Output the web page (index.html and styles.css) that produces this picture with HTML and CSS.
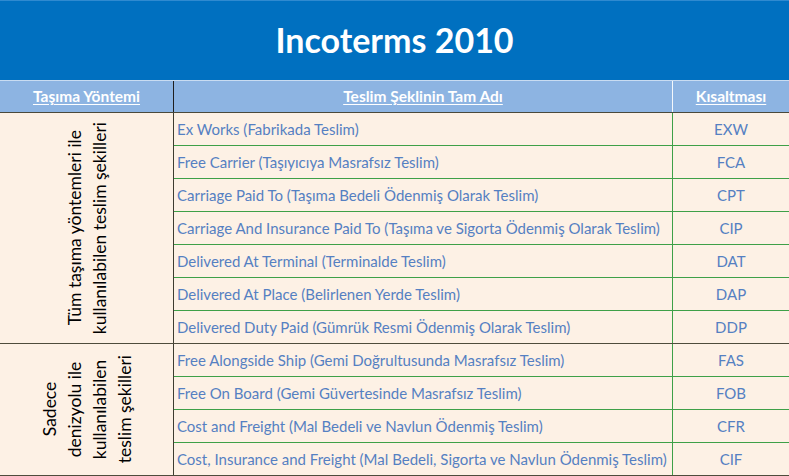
FILE: index.html
```html
<!DOCTYPE html>
<html lang="tr">
<head>
<meta charset="utf-8">
<title>Incoterms 2010</title>
<link rel="stylesheet" href="styles.css">
</head>
<body>
<div class="sheet">
  <div class="title">Incoterms 2010</div>
  <div class="head">
    <div class="c1"><span>Taşıma Yöntemi</span></div>
    <div class="c2"><span>Teslim Şeklinin Tam Adı</span></div>
    <div class="c3"><span>Kısaltması</span></div>
  </div>
  <div class="group">
    <div class="side"><div class="vtext">Tüm taşıma yöntemleri ile<br>kullanılabilen teslim şekilleri</div></div>
    <div class="rows">
      <div class="row"><div class="name">Ex Works (Fabrikada Teslim)</div><div class="code">EXW</div></div>
      <div class="row"><div class="name">Free Carrier (Taşıyıcıya Masrafsız Teslim)</div><div class="code">FCA</div></div>
      <div class="row"><div class="name">Carriage Paid To (Taşıma Bedeli Ödenmiş Olarak Teslim)</div><div class="code">CPT</div></div>
      <div class="row"><div class="name">Carriage And Insurance Paid To (Taşıma ve Sigorta Ödenmiş Olarak Teslim)</div><div class="code">CIP</div></div>
      <div class="row"><div class="name">Delivered At Terminal (Terminalde Teslim)</div><div class="code">DAT</div></div>
      <div class="row"><div class="name">Delivered At Place (Belirlenen Yerde Teslim)</div><div class="code">DAP</div></div>
      <div class="row"><div class="name">Delivered Duty Paid (Gümrük Resmi Ödenmiş Olarak Teslim)</div><div class="code">DDP</div></div>
    </div>
  </div>
  <div class="group">
    <div class="side"><div class="vtext">Sadece<br>denizyolu ile<br>kullanılabilen<br>teslim şekilleri</div></div>
    <div class="rows">
      <div class="row"><div class="name">Free Alongside Ship (Gemi Doğrultusunda Masrafsız Teslim)</div><div class="code">FAS</div></div>
      <div class="row"><div class="name">Free On Board (Gemi Güvertesinde Masrafsız Teslim)</div><div class="code">FOB</div></div>
      <div class="row"><div class="name">Cost and Freight (Mal Bedeli ve Navlun Ödenmiş Teslim)</div><div class="code">CFR</div></div>
      <div class="row"><div class="name">Cost, Insurance and Freight (Mal Bedeli, Sigorta ve Navlun Ödenmiş Teslim)</div><div class="code">CIF</div></div>
    </div>
  </div>
</div>
</body>
</html>
```
FILE: styles.css
```css
* { box-sizing: border-box; }
html, body { margin: 0; padding: 0; background: #fdf1e5; }
body { font-family: Lato, "Open Sans", sans-serif; width: 789px; height: 476px; overflow: hidden; }
.sheet { width: 789px; }
.title {
  height: 80px;
  background: #0070c0;
  border-top: 1px solid #2f8ad0;
  color: #fff;
  font-weight: 700;
  font-size: 34px;
  display: flex;
  align-items: center;
  justify-content: center;
  padding-bottom: 2px;
}
.head {
  display: flex;
  height: 33px;
  background: #8db4e2;
  border-top: 1px solid #c9dcf2;
  border-bottom: 1px solid #4a4a3c;
  color: #fff;
  font-weight: 700;
  font-size: 15.5px;
}
.head > div { display: flex; align-items: center; justify-content: center; padding-bottom: 1px; }
.head span { text-decoration: underline; text-underline-offset: 2px; }
.head .c1 { width: 174px; border-right: 1px solid #1e1e1e; }
.head .c2 { width: 499px; border-right: 1px solid #f4f8fc; }
.head .c3 { width: 116px; }
.group { display: flex; border-bottom: 1px solid #4e4c3c; }
.side {
  width: 174px;
  border-right: 1px solid #3e3c30;
  display: flex;
  align-items: center;
  justify-content: center;
}
.vtext {
  writing-mode: vertical-rl;
  transform: rotate(180deg);
  text-align: center;
  font-size: 17.5px;
  line-height: 25px;
  color: #000;
}
.rows { display: flex; flex-direction: column; }
.row { display: flex; height: 33px; border-bottom: 1px solid #3ea048; }
.row:last-child { height: 32px; border-bottom: none; }
.name {
  width: 499px;
  border-right: 1px solid #3ea048;
  padding-left: 3px;
  display: flex;
  align-items: center;
  color: #5580c2;
  font-size: 15px;
  white-space: nowrap;
}
.code {
  width: 116px;
  display: flex;
  align-items: center;
  justify-content: center;
  color: #5580c2;
  font-size: 15px;
}
```
